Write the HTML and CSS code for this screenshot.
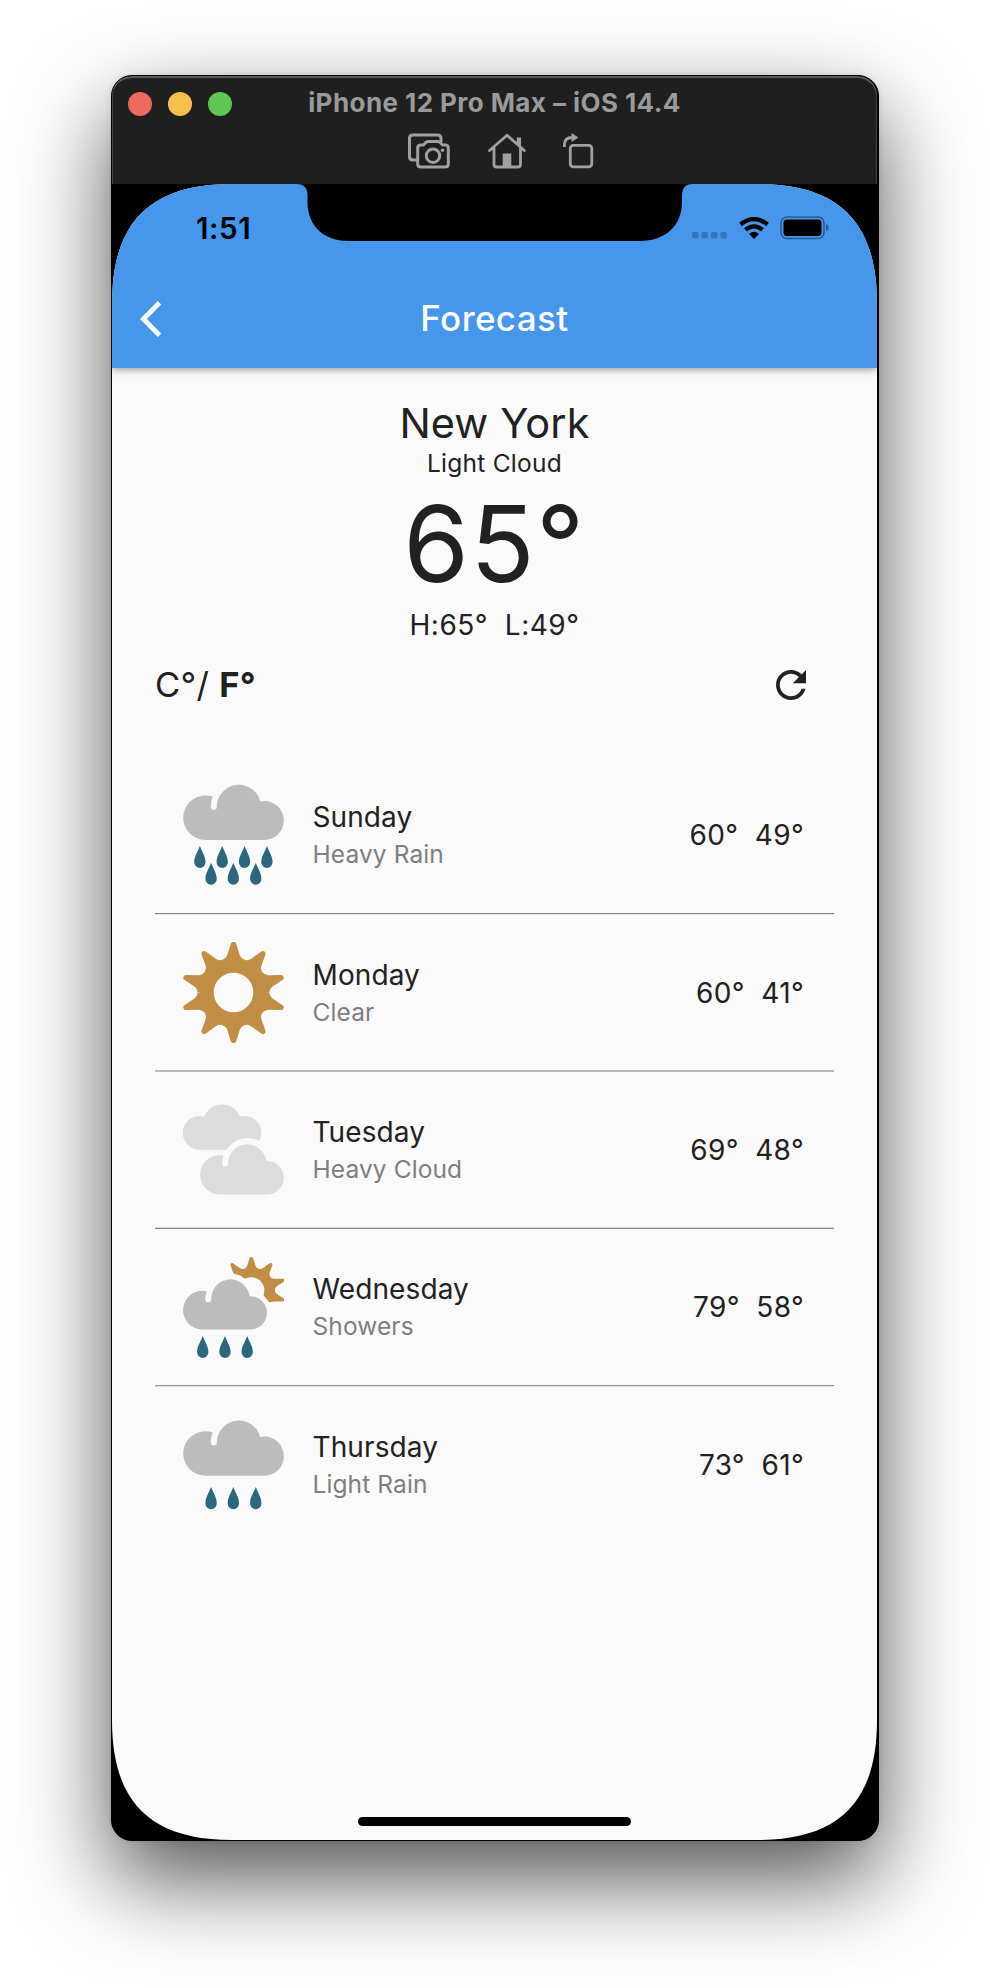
FILE: index.html
```html
<!DOCTYPE html>
<html lang="en">
<head>
<meta charset="utf-8">
<title>Forecast</title>
<link rel="stylesheet" href="styles.css">
</head>
<body>
<svg class="defs" aria-hidden="true">
  <defs>
    <path id="drop" d="M0 0C5 14 17 31 17 48A17 18 0 0 1-17 48C-17 31-5 14 0 0Z"/>
    <path id="cloud" d="M197 468Q208 468 219 471Q213 485 213 502A9 9 0 0 0 231 502A66 66 0 0 1 361 486Q367 484 373 484A58.5 58.5 0 0 1 373 601H197A66.5 66.5 0 0 1 197 468Z"/>
    <path id="ray" d="M-18-62L-31.8-98Q-22.3-101-18.5-110L-8-145A8.2 8.2 0 0 1 8-145L18.5-110Q22.3-101 31.8-98L18-62Z"/>
    <g id="sun">
      <circle r="79.5" fill="none" stroke="#c08e45" stroke-width="41"/>
      <g transform="scale(1.04 1)"><use href="#ray"/><use href="#ray" transform="rotate(36)"/><use href="#ray" transform="rotate(72)"/><use href="#ray" transform="rotate(108)"/><use href="#ray" transform="rotate(144)"/><use href="#ray" transform="rotate(180)"/><use href="#ray" transform="rotate(216)"/><use href="#ray" transform="rotate(252)"/><use href="#ray" transform="rotate(288)"/><use href="#ray" transform="rotate(324)"/></g>
    </g>
  </defs>
</svg>
<main class="window">
  <header class="titlebar">
    <div class="title-row">
      <div class="lights"><i class="light red"></i><i class="light yellow"></i><i class="light green"></i></div>
      <h1 class="title">iPhone 12 Pro Max – iOS 14.4</h1>
    </div>
    <div class="tools">
      <svg width="42" height="36" viewBox="0 0 42 36" fill="none" stroke="#a0a0a0" stroke-width="3" stroke-linejoin="round"><path d="M9 27H5Q1.500 27 1.500 23.500V5.500Q1.500 2 5 2H29.500Q33 2 33 5.500V9"/><path d="M12.500 12H15.500L18 9.300Q19 8.500 20.500 8.500H29.500Q31 8.500 32 9.300L34.500 12H37.300Q40.300 12 40.300 15V31Q40.300 34 37.100 34H12.900Q9.700 34 9.700 31V15Q9.700 12 12.500 12Z"/><circle cx="25" cy="22.700" r="6.700"/><circle cx="34.500" cy="17.200" r="1.800" fill="#a0a0a0" stroke="none"/></svg>
      <svg width="38" height="36" viewBox="0 0 38 36" fill="none" stroke="#a0a0a0" stroke-width="2.800" stroke-linecap="round" stroke-linejoin="round"><path d="M1.600 17.500L19 2.300L36.400 17.500M6 15V31.500Q6 34 8.500 34H30Q32.500 34 32.500 31.500V15"/><path d="M28.800 4.500H33V14.500L28.800 10.500Z" fill="#a0a0a0" stroke="none"/><path d="M14.700 20.500H23.300V33.500H14.700Z" fill="#a0a0a0" stroke="none"/></svg>
      <svg class="rotate" width="32" height="36" viewBox="0 0 32 36" fill="none" stroke="#a0a0a0" stroke-width="2.800"><path d="M1.400 14V12Q1.400 4.500 9 4.500"/><path d="M8.500 0L15.500 4.500L8.500 9Z" fill="#a0a0a0" stroke="none"/><rect x="7.300" y="12.300" width="21.500" height="21.500" rx="3"/></svg>
    </div>
  </header>

  <section class="screen">
    <svg class="notch" width="395" height="58" viewBox="0 0 395 58"><path d="M0 0H395Q385 0 385 12V18C385 42 368 57 343 57H51C27 57 10.500 42 10.500 18V12Q10.500 0 0 0Z"/></svg>
    <header class="appbar">
      <div class="status">
        <time class="clock">1:51</time>
        <div class="signals">
          <svg width="36" height="24" viewBox="0 0 36 24" fill="#3674b8"><rect x="0" y="16" width="6.500" height="6.500" rx="2"/><rect x="9.500" y="16" width="6.500" height="6.500" rx="2"/><rect x="19" y="16" width="6.500" height="6.500" rx="2"/><rect x="28.500" y="16" width="6.500" height="6.500" rx="2"/></svg>
          <svg width="30" height="22" viewBox="0 0 30 22" fill="none" stroke="#000" stroke-width="4.200"><path d="M1.500 7.500Q15-3.500 28.500 7.500"/><path d="M6.500 12.800Q15 5.800 23.500 12.800"/><path d="M10 17Q15 12.500 20 17L15 22Z" fill="#000" stroke="none"/></svg>
          <svg width="49" height="24" viewBox="0 0 49 24"><rect x="1" y="1" width="43" height="21.500" rx="6" fill="none" stroke="#2b5c92" stroke-width="1.600"/><rect x="3.500" y="3.500" width="38" height="16.500" rx="3.500"/><path d="M46 7.500Q51 11.500 46 15.500Z" fill="#2b5c92"/></svg>
        </div>
      </div>
      <div class="nav">
        <svg class="back" width="22" height="36" viewBox="0 0 22 36" fill="none" stroke="#fff" stroke-width="4.800"><path d="M19.500 1.800L3.400 18L19.500 34.200"/></svg>
        <h2 class="nav-title">Forecast</h2>
      </div>
    </header>

    <section class="current">
      <p class="city">New York</p>
      <p class="condition">Light Cloud</p>
      <p class="degrees">65°</p>
      <p class="range">H:65°&nbsp; L:49°</p>
    </section>

    <div class="controls">
      <p class="units">C°/ <b>F°</b></p>
      <svg width="30" height="30" viewBox="4 4 16 16" fill="#212121"><path d="M17.650 6.350C16.200 4.900 14.210 4 12 4c-4.420 0-7.990 3.580-7.990 8s3.570 8 7.990 8c3.730 0 6.840-2.550 7.730-6h-2.080c-.82 2.330-3.040 4-5.650 4-3.310 0-6-2.690-6-6s2.690-6 6-6c1.660 0 3.140.69 4.220 1.780L13 11h7V4l-2.350 2.350z"/></svg>
    </div>

    <ul class="days">
      <li class="day first">
        <svg class="icon" viewBox="130 433.500 302 302"><use href="#cloud" fill="#bcbcbc"/><g fill="#2b687d"><use href="#drop" x="180.500" y="619"/><use href="#drop" x="247.300" y="619"/><use href="#drop" x="314" y="619"/><use href="#drop" x="381" y="619"/><use href="#drop" x="214" y="669"/><use href="#drop" x="280.500" y="669"/><use href="#drop" x="347.500" y="669"/></g></svg>
        <div class="names"><p class="name">Sunday</p><p class="desc">Heavy Rain</p></div>
        <p class="temps">60°&nbsp; 49°</p>
      </li>
      <li class="rule rule-a"></li>
      <li class="day">
        <svg class="icon" viewBox="130 66.500 302 302"><use href="#sun" transform="translate(281 217.500)" fill="#c08e45"/></svg>
        <div class="names"><p class="name">Monday</p><p class="desc">Clear</p></div>
        <p class="temps">60°&nbsp; 41°</p>
      </li>
      <li class="rule rule-b"></li>
      <li class="day">
        <svg class="icon" viewBox="130 537.500 302 302" fill="#dcdcdc"><path d="M180 588Q187 588 194 590A57 57 0 0 1 300 590Q307 588 313 588A50.500 50.500 0 0 1 358 663A75 75 0 0 0 260 689H180A50.500 50.500 0 0 1 180 588Z"/><path d="M240 705Q246 705 251 708Q248 717 247.500 731A8.500 8.500 0 0 0 264.500 731A57.500 57.500 0 0 1 379 723H381A50.500 50 0 0 1 381 823H240A59 59 0 0 1 240 705Z"/></svg>
        <div class="names"><p class="name">Tuesday</p><p class="desc">Heavy Cloud</p></div>
        <p class="temps">69°&nbsp; 48°</p>
      </li>
      <li class="rule rule-c"></li>
      <li class="day tall">
        <svg class="icon" viewBox="130 110 302 302"><mask id="behind"><path fill="#fff" d="M260 100H440V245H388L372 226L350 190L310 172L302 165L284 161L260 140Z"/></mask><g mask="url(#behind)"><use href="#sun" transform="translate(334.500 209) scale(.655)" fill="#c08e45"/></g><path fill="#bcbcbc" d="M188 211Q195 211 201 213Q197 222 196.500 236A8.500 8.500 0 0 0 214.500 236A57.500 57.500 0 0 1 329 227H331A50 50 0 0 1 331 327H188A58 58 0 0 1 188 211Z"/><g fill="#2b687d"><use href="#drop" x="189" y="346"/><use href="#drop" x="255.500" y="346"/><use href="#drop" x="322" y="346"/></g></svg>
        <div class="names"><p class="name">Wednesday</p><p class="desc">Showers</p></div>
        <p class="temps">79°&nbsp; 58°</p>
      </li>
      <li class="rule rule-d"></li>
      <li class="day">
        <svg class="icon" viewBox="130 416.500 302 302"><use href="#cloud" fill="#bcbcbc"/><g fill="#2b687d"><use href="#drop" x="214" y="635"/><use href="#drop" x="280.500" y="635"/><use href="#drop" x="347.500" y="635"/></g></svg>
        <div class="names"><p class="name">Thursday</p><p class="desc">Light Rain</p></div>
        <p class="temps">73°&nbsp; 61°</p>
      </li>
    </ul>
    <div class="home-bar"></div>
  </section>
</main>
</body>
</html>
```
FILE: styles.css
```css
* { box-sizing: border-box; margin: 0; padding: 0; }
body {
  height: 1988px;
  padding: 75px 111px 0;
  background: #fff;
  color: #212121;
  font-family: Inter, "Liberation Sans", sans-serif;
  overflow: hidden;
}
svg { display: block; flex: none; }
.defs { position: absolute; width: 0; height: 0; }
p { white-space: nowrap; }

.window {
  width: 768px;
  height: 1766px;
  padding-right: 1px;
  background: #000;
  border: 1px solid #000;
  border-radius: 21px;
  overflow: hidden;
  box-shadow: 0 38px 92px rgba(0, 0, 0, .68), 0 0 6px rgba(0, 0, 0, .1);
}
.titlebar {
  height: 108px;
  background: #1f1f1f;
  border-radius: 20px 20px 0 0;
  box-shadow: inset 0 2px 0 #5c5c5c, inset 1px 0 0 #444, inset -1px 0 0 #444;
}
.title-row { position: relative; height: 56px; display: flex; align-items: center; justify-content: center; }
.lights { position: absolute; left: 16px; top: 16px; display: flex; gap: 16px; }
.light { width: 24px; height: 24px; border-radius: 50%; }
.red { background: #ed6a5e; }
.yellow { background: #f5bf4f; }
.green { background: #61c554; }
.title { font-size: 26px; line-height: 52px; height: 54px; font-weight: 700; color: #9a9a9a; letter-spacing: .43px; white-space: nowrap; }
.tools { display: flex; align-items: flex-start; gap: 38px; padding: 1px 0 0 296px; }
.rotate { margin-left: -1px; }

.screen {
  position: relative;
  height: 1656px;
  display: flex;
  flex-direction: column;
  background: #fafafa;
  clip-path: path("M0 120C0 38 38 0 120 0H645C727 0 765 38 765 120V1536C765 1618 727 1656 645 1656H120C38 1656 0 1618 0 1536Z");
}
.notch { position: absolute; left: 185px; top: 0; z-index: 1; }
.appbar { height: 184px; flex: none; background: #4696ec; box-shadow: 0 1px 8px rgba(0, 0, 0, .45); }
.status { height: 87px; display: flex; align-items: center; justify-content: space-between; padding: 0 48px 0 84px; }
.clock { font-size: 29.5px; font-weight: 600; color: #000; letter-spacing: .6px; }
.signals { display: flex; align-items: center; gap: 11px; }
.nav { height: 95px; display: grid; grid-template-columns: 1fr auto 1fr; align-items: center; }
.back { margin-left: 28px; }
.nav-title { font-size: 35px; font-weight: 500; color: #fff; height: 95px; line-height: 94px; letter-spacing: .4px; }

.current { padding-top: 32px; text-align: center; }
.city { font-size: 41.5px; line-height: 46px; letter-spacing: .1px; }
.condition { font-size: 24.5px; line-height: 34px; letter-spacing: .25px; }
.degrees { font-size: 106px; line-height: 127px; height: 125px; letter-spacing: 1.3px; }
.range { font-size: 28px; line-height: 40px; letter-spacing: .5px; }

.controls { height: 80px; display: flex; align-items: center; justify-content: space-between; padding: 0 71px 0 43px; }
.units { font-size: 34.5px; line-height: 42px; height: 42px; letter-spacing: .3px; }

.days { list-style: none; padding: 31px 43px 0; }
.day { height: 155px; display: flex; align-items: center; padding: 0 30px 0 28px; }
.day.first { height: 157px; }
.day.tall { height: 156px; }
.icon { width: 101px; height: 101px; margin-right: 28.5px; }
.names { flex: 1; padding-top: 2.5px; }
.name { font-size: 28px; line-height: 37px; letter-spacing: .1px; }
.desc { font-size: 24.5px; line-height: 37px; color: #7f7f7f; letter-spacing: .1px; }
.temps { font-size: 28px; letter-spacing: .35px; }
.rule { height: 2px; }
.rule-a { background: linear-gradient(#838383 50%, #e4e4e4 50%); }
.rule-b { background: #b9b9b9; }
.rule-c { background: linear-gradient(#dcdcdc 50%, #858585 50%); }
.rule-d { background: linear-gradient(#959595 50%, #dcdcdc 50%); }

.home-bar { width: 273px; height: 9px; margin: auto auto 14px; border-radius: 5px; background: #000; }
```
